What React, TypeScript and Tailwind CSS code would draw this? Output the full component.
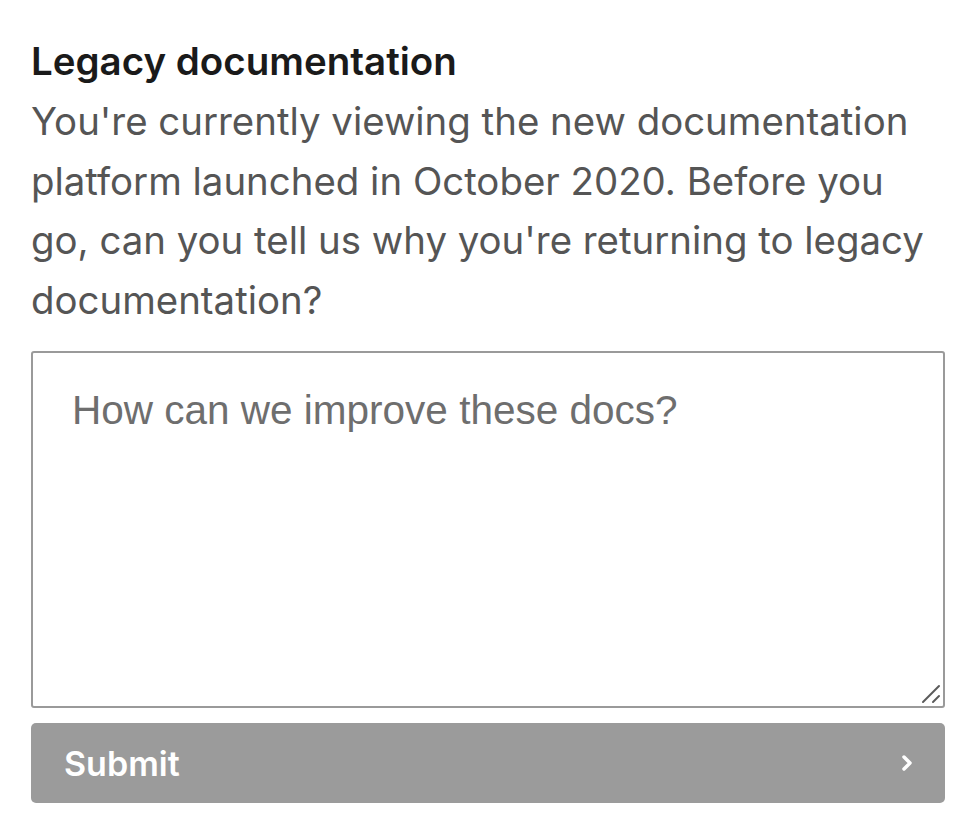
import React from 'react';

const App: React.FC = () => {
  return (
    <div className="min-h-screen w-full bg-white px-[31px] pt-[30px] font-['Inter',sans-serif]">
      <h2 className="text-[38.5px] font-semibold leading-[62px] text-[#1a1a1a]">Legacy documentation</h2>
      <p className="text-[38.4px] leading-[59.5px] text-[#555555]">
        You're currently viewing the new documentation platform launched in October 2020. Before you go, can you
        tell us why you're returning to legacy documentation?
      </p>
      <form className="mt-[21px] flex flex-col gap-[15px]" onSubmit={(e) => e.preventDefault()}>
        <div className="relative">
          <textarea
            className="block h-[357px] w-full resize-none rounded-[3px] border-2 border-[#9a9a9a] px-[39px] py-[32px] font-['Liberation_Sans',sans-serif] text-[40.5px] leading-[50px] text-[#333] outline-none placeholder:text-[#6e6e6e]"
            placeholder="How can we improve these docs?"
          />
          <svg className="pointer-events-none absolute bottom-[4px] right-[4px]" width="20" height="20" viewBox="0 0 20 20" fill="none" stroke="#5a5a5a" strokeWidth="2" strokeLinecap="round">
            <path d="M2 18L18 2" />
            <path d="M12 18L18 12" />
          </svg>
        </div>
        <button
          type="submit"
          className="flex h-[80px] w-full items-center justify-between rounded-[5px] bg-[#9b9b9b] pl-[33px] pr-[30px] text-[34px] font-semibold text-white"
        >
          <span>Submit</span>
          <svg width="14" height="20" viewBox="0 0 14 20" fill="none" stroke="currentColor" strokeWidth="3.5" strokeLinecap="round" strokeLinejoin="round">
            <path d="M3 4l6 6-6 6" />
          </svg>
        </button>
      </form>
    </div>
  );
};

export default App;
